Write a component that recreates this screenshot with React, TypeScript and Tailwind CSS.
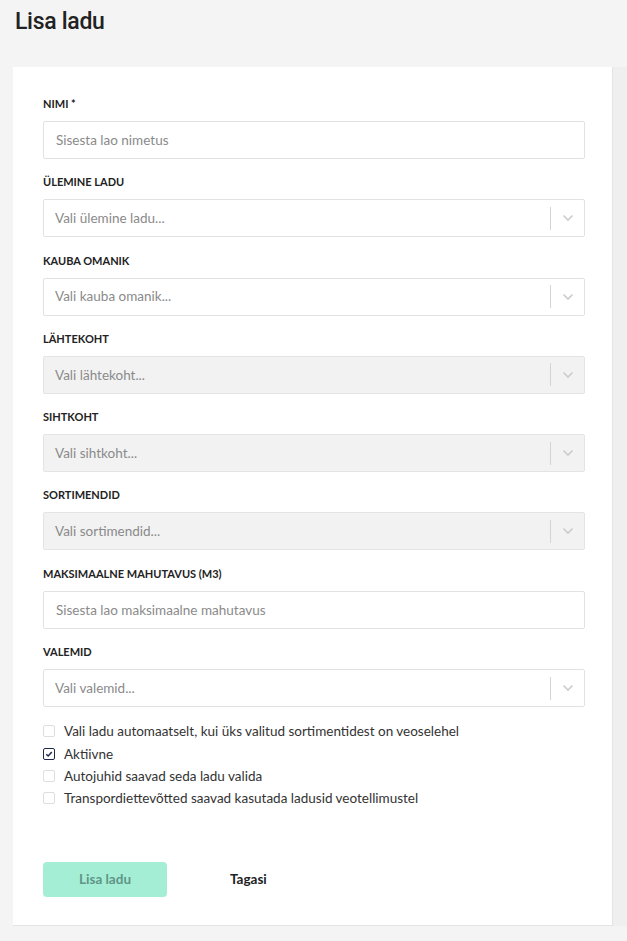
import clsx from 'clsx';

type Field = {
  label: string;
  placeholder: string;
  kind: 'input' | 'select';
  disabled?: boolean;
};

const fields: Field[] = [
  { label: 'NIMI *', placeholder: 'Sisesta lao nimetus', kind: 'input' },
  { label: 'ÜLEMINE LADU', placeholder: 'Vali ülemine ladu...', kind: 'select' },
  { label: 'KAUBA OMANIK', placeholder: 'Vali kauba omanik...', kind: 'select' },
  { label: 'LÄHTEKOHT', placeholder: 'Vali lähtekoht...', kind: 'select', disabled: true },
  { label: 'SIHTKOHT', placeholder: 'Vali sihtkoht...', kind: 'select', disabled: true },
  { label: 'SORTIMENDID', placeholder: 'Vali sortimendid...', kind: 'select', disabled: true },
  { label: 'MAKSIMAALNE MAHUTAVUS (M3)', placeholder: 'Sisesta lao maksimaalne mahutavus', kind: 'input' },
  { label: 'VALEMID', placeholder: 'Vali valemid...', kind: 'select' },
];

const options = [
  { label: 'Vali ladu automaatselt, kui üks valitud sortimentidest on veoselehel', checked: false },
  { label: 'Aktiivne', checked: true },
  { label: 'Autojuhid saavad seda ladu valida', checked: false },
  { label: 'Transpordiettevõtted saavad kasutada ladusid veotellimustel', checked: false },
];

function Chevron() {
  return (
    <svg width="12" height="8" viewBox="0 0 12 8" fill="none">
      <path d="M1.5 1.5 6 6l4.5-4.5" stroke="#cccccc" strokeWidth="1.6" />
    </svg>
  );
}

function Checkbox({ checked }: { checked: boolean }) {
  return (
    <span
      className={clsx(
        'flex h-[12px] w-[12px] shrink-0 items-center justify-center rounded-[2px] border',
        checked ? 'border-[1.5px] border-[#1d2a4a] bg-white' : 'border-[#dedede] bg-white',
      )}
    >
      {checked && (
        <svg width="8" height="8" viewBox="0 0 8 8" fill="none">
          <path d="M1.3 4.2 3.2 6 6.8 2" stroke="#1d2a4a" strokeWidth="1.5" />
        </svg>
      )}
    </span>
  );
}

function FormField({ field }: { field: Field }) {
  const box = clsx(
    'flex h-[38px] items-center rounded-[2px] border text-[13.5px] text-[#8a8a8a]',
    field.disabled ? 'border-[#e4e4e4] bg-[#f2f2f2]' : 'border-[#e2e2e2] bg-white',
  );

  return (
    <div className="flex flex-col">
      <label className="mb-[10px] text-[11px] leading-[14px] font-bold text-[#222]">{field.label}</label>
      {field.kind === 'input' ? (
        <div className={clsx(box, 'px-[12px]')}>{field.placeholder}</div>
      ) : (
        <div className={box}>
          <span className="flex-1 px-[11px]">{field.placeholder}</span>
          <span className="h-[23px] w-px bg-[#d4d4d4]" />
          <span className="flex w-[33px] items-center justify-center">
            <Chevron />
          </span>
        </div>
      )}
    </div>
  );
}

export default function App() {
  return (
    <div className="min-h-[941px] bg-[#f4f4f4] font-['Lato','Noto_Sans',sans-serif]">
      <h1 className="px-[15px] pt-[7px] font-['Roboto',sans-serif] text-[23px] leading-[30px] font-medium tracking-[-0.3px] text-[#222]">
        Lisa ladu
      </h1>

      <div className="mt-[30px] flex">
        <div className="ml-[13px] w-[600px] border-r border-b border-[#e4e4e4] bg-white pt-[30px] pr-[27px] pb-[28px] pl-[30px]">
          <div className="flex flex-col gap-[16.3px]">
            {fields.map((f) => (
              <FormField key={f.label} field={f} />
            ))}
          </div>

          <div className="mt-[13px] flex flex-col">
            {options.map((o) => (
              <label key={o.label} className="flex h-[22.4px] items-center gap-[9px] text-[13.5px] text-[#333]">
                <Checkbox checked={o.checked} />
                {o.label}
              </label>
            ))}
          </div>

          <div className="mt-[52px] flex items-center">
            <button
              type="button"
              className="h-[35px] w-[124px] rounded-[4px] bg-[#a5eed6] text-[13.5px] font-bold text-[#5f9585]"
            >
              Lisa ladu
            </button>
            <button type="button" className="ml-[48px] px-[15px] text-[13.5px] font-bold text-[#222]">
              Tagasi
            </button>
          </div>
        </div>
        <div className="flex-1 bg-[#efefef]" />
      </div>
    </div>
  );
}
